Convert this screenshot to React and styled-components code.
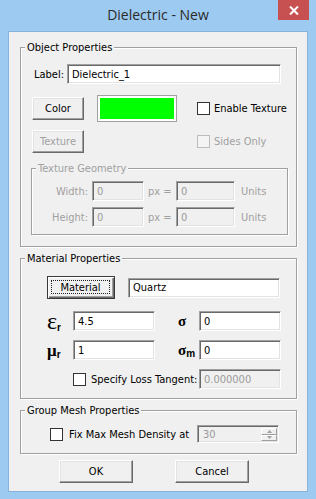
import React from "react";
import styled, { createGlobalStyle, css } from "styled-components";

const GlobalStyle = createGlobalStyle`
  html, body {
    margin: 0;
    padding: 0;
  }
  body {
    background: #9dcaf0;
    font-family: "DejaVu Sans Condensed", "Liberation Sans", sans-serif;
    font-size: 11px;
    color: #000;
  }
`;

const Window = styled.div`
  width: 316px;
  height: 499px;
  background: #9dcaf0;
  display: flex;
  flex-direction: column;
`;

const TitleBar = styled.div`
  height: 31px;
  position: relative;
  display: flex;
  justify-content: center;
  align-items: flex-start;
  padding-top: 5px;
  box-sizing: border-box;
`;

const Title = styled.div`
  font-family: "Open Sans", "Liberation Sans", sans-serif;
  font-size: 14px;
  line-height: 20px;
  color: #2a2a2a;
`;

const CloseBtn = styled.div`
  position: absolute;
  top: 0;
  right: 7px;
  width: 31px;
  height: 20px;
  background: #c75050;
  display: flex;
  align-items: center;
  justify-content: center;
`;

const Client = styled.div`
  margin: 0 8px;
  height: 461px;
  box-sizing: border-box;
  border: 1px solid #86b3de;
  background: #f0f0f0;
  padding: 9px 10px 0 11px;
  display: flex;
  flex-direction: column;
`;

const Group = styled.fieldset`
  margin: ${(p) => p.$margin || "0"};
  padding: ${(p) => p.$padding || "0"};
  min-width: 0;
  border: 1px solid #a0a0a0;
  box-shadow: 1px 1px 0 #fff, inset 1px 1px 0 #fff;
  color: ${(p) => (p.$disabled ? "#a0a0a0" : "#000")};
`;

const Legend = styled.legend`
  margin-left: 4px;
  padding: 0 2px;
  line-height: 13px;
  background: #f0f0f0;
`;

const Row = styled.div`
  display: flex;
  align-items: center;
  height: ${(p) => p.$h || 20}px;
  margin-top: ${(p) => p.$mt || 0}px;
  padding-left: ${(p) => p.$pl || 0}px;
`;

const Text = styled.span`
  display: inline-block;
  width: ${(p) => (p.$w ? `${p.$w}px` : "auto")};
  margin-left: ${(p) => p.$ml || 0}px;
  text-align: ${(p) => p.$align || "left"};
  color: ${(p) => (p.$disabled ? "#a0a0a0" : "inherit")};
  white-space: nowrap;
`;

const sunken = css`
  box-sizing: border-box;
  border-style: solid;
  border-width: 1px;
  border-color: #a0a0a0 #fff #fff #a0a0a0;
  box-shadow: inset 1px 1px 0 #696969, inset -1px -1px 0 #e3e3e3;
`;

const Field = styled.input`
  ${sunken};
  width: ${(p) => p.$w}px;
  height: ${(p) => p.$h || 20}px;
  margin: 0 0 0 ${(p) => p.$ml || 0}px;
  padding: 0 0 0 4px;
  font: inherit;
  color: ${(p) => (p.disabled ? "#9a9a9a" : "#000")};
  background: ${(p) => (p.disabled ? "#f0f0f0" : "#fff")};
  outline: none;
`;

const Button = styled.button`
  box-sizing: border-box;
  width: ${(p) => p.$w}px;
  height: 23px;
  margin: 0 0 0 ${(p) => p.$ml || 0}px;
  padding: 0;
  font: inherit;
  color: ${(p) => (p.disabled ? "#a0a0a0" : "#000")};
  background: #f0f0f0;
  border-style: solid;
  border-width: 1px;
  border-color: #fff #696969 #696969 #fff;
  box-shadow: inset -1px -1px 0 #a0a0a0, inset 1px 1px 0 #e3e3e3;
  display: flex;
  align-items: center;
  justify-content: center;
`;

const DefaultButton = styled(Button)`
  border-color: #3a3a3a;
  box-shadow: inset 1px 1px 0 #fff, inset -1px -1px 0 #696969,
    inset -2px -2px 0 #a0a0a0;
  padding: 3px 4px 4px 3px;
`;

const FocusRing = styled.span`
  flex: 1;
  align-self: stretch;
  border: 1px dotted #222;
  display: flex;
  align-items: center;
  justify-content: center;
`;

const Swatch = styled.div`
  box-sizing: border-box;
  width: 80px;
  height: 27px;
  margin-left: 13px;
  border: 1px solid #a0a0a0;
  padding: 2px;
  background: #fff;
`;

const SwatchFill = styled.div`
  width: 100%;
  height: 100%;
  background: ${(p) => p.$color};
`;

const Check = styled.span`
  box-sizing: border-box;
  width: 13px;
  height: 13px;
  flex: none;
  margin-left: ${(p) => p.$ml || 0}px;
  border: 1px solid ${(p) => (p.$disabled ? "#bcbcbc" : "#333")};
  background: ${(p) => (p.$disabled ? "#f4f4f4" : "#fff")};
`;

const ParamGrid = styled.div`
  display: grid;
  grid-template-columns: 26px 82px 23px 21px 82px;
  grid-auto-rows: 20px;
  row-gap: 9px;
  margin-top: 12px;
  padding-left: 26px;
  align-items: center;
`;

const Sym = styled.span`
  display: flex;
  align-items: baseline;
  font-weight: bold;
  color: #000;
  grid-column: ${(p) => p.$col};
`;

const Greek = styled.span`
  font-family: "Liberation Serif", "DejaVu Serif", serif;
  font-size: ${(p) => p.$size}px;
  font-weight: ${(p) => p.$weight || "bold"};
  line-height: 1;
`;

const Sub = styled.span`
  font-family: "Liberation Sans", sans-serif;
  font-size: 10px;
  font-weight: bold;
  position: relative;
  top: 2px;
`;

const Cell = styled.div`
  grid-column: ${(p) => p.$col};
  display: flex;
  align-items: center;
`;

const Spin = styled.div`
  ${sunken};
  width: 82px;
  height: 18px;
  margin-left: ${(p) => p.$ml || 0}px;
  background: #f0f0f0;
  display: flex;
  align-items: stretch;
  padding: 2px 1px 1px 2px;
  color: #9a9a9a;
`;

const SpinValue = styled.span`
  flex: 1;
  padding-left: 3px;
  display: flex;
  align-items: center;
`;

const SpinArrows = styled.div`
  width: 16px;
  display: flex;
  flex-direction: column;
`;

const SpinHalf = styled.div`
  flex: 1;
  box-sizing: border-box;
  border-style: solid;
  border-width: 1px;
  border-color: #fff #a0a0a0 #a0a0a0 #fff;
  display: flex;
  align-items: center;
  justify-content: center;
`;

const Footer = styled.div`
  display: flex;
  gap: 42px;
  margin-top: 6px;
  padding-left: 39px;
`;

const Arrow = ({ up }) => (
  <svg width="5" height="3" viewBox="0 0 5 3">
    <path d={up ? "M0 3 L2.5 0 L5 3 Z" : "M0 0 L2.5 3 L5 0 Z"} fill="#a0a0a0" />
  </svg>
);

export default function App() {
  return (
    <>
      <GlobalStyle />
      <Window>
        <TitleBar>
          <Title>Dielectric - New</Title>
          <CloseBtn>
            <svg width="10" height="9" viewBox="0 0 10 9">
              <path d="M1 0.5 L9 8.5 M9 0.5 L1 8.5" stroke="#fff" strokeWidth="2" />
            </svg>
          </CloseBtn>
        </TitleBar>

        <Client>
          <Group $padding="10px 0 11px 0">
            <Legend>Object Properties</Legend>
            <Row $pl={13}>
              <Text $w={33}>Label:</Text>
              <Field $w={214} defaultValue="Dielectric_1" />
            </Row>
            <Row $h={27} $mt={11} $pl={11}>
              <Button $w={52}>Color</Button>
              <Swatch>
                <SwatchFill $color="#00ff00" />
              </Swatch>
              <Check $ml={20} />
              <Text $ml={4}>Enable Texture</Text>
            </Row>
            <Row $h={23} $mt={8} $pl={11}>
              <Button $w={52} disabled>
                Texture
              </Button>
              <Check $ml={113} $disabled />
              <Text $ml={4} $disabled>
                Sides Only
              </Text>
            </Row>
            <Group $margin="9px 8px 0 10px" $padding="6px 0 7px 0" $disabled>
              <Legend>Texture Geometry</Legend>
              <Row>
                <Text $w={56} $align="right">Width:</Text>
                <Field $w={52} $ml={4} disabled defaultValue="0" />
                <Text $ml={4} $w={28}>px =</Text>
                <Field $w={59} disabled defaultValue="0" />
                <Text $ml={6}>Units</Text>
              </Row>
              <Row $mt={6}>
                <Text $w={56} $align="right">Height:</Text>
                <Field $w={52} $ml={4} disabled defaultValue="0" />
                <Text $ml={4} $w={28}>px =</Text>
                <Field $w={59} disabled defaultValue="0" />
                <Text $ml={6}>Units</Text>
              </Row>
            </Group>
          </Group>

          <Group $margin="5px 0 0 0" $padding="11px 0 9px 0">
            <Legend>Material Properties</Legend>
            <Row $h={23} $pl={26}>
              <DefaultButton $w={68}>
                <FocusRing>Material</FocusRing>
              </DefaultButton>
              <Field $w={152} $ml={13} defaultValue="Quartz" />
            </Row>
            <ParamGrid>
              <Sym $col={1}>
                <Greek $size={24} $weight="normal">ε</Greek>
                <Sub>r</Sub>
              </Sym>
              <Cell $col={2}>
                <Field $w={82} defaultValue="4.5" />
              </Cell>
              <Sym $col={4}>
                <Greek $size={15}>σ</Greek>
              </Sym>
              <Cell $col={5}>
                <Field $w={82} defaultValue="0" />
              </Cell>

              <Sym $col={1}>
                <Greek $size={17}>μ</Greek>
                <Sub>r</Sub>
              </Sym>
              <Cell $col={2}>
                <Field $w={82} defaultValue="1" />
              </Cell>
              <Sym $col={4}>
                <Greek $size={15}>σ</Greek>
                <Sub>m</Sub>
              </Sym>
              <Cell $col={5}>
                <Field $w={82} defaultValue="0" />
              </Cell>

              <Cell $col="2 / 5">
                <Check />
                <Text $ml={5}>Specify Loss Tangent:</Text>
              </Cell>
              <Cell $col={5}>
                <Field $w={82} disabled defaultValue="0.000000" />
              </Cell>
            </ParamGrid>
          </Group>

          <Group $margin="5px 0 0 0" $padding="8px 0 10px 0">
            <Legend>Group Mesh Properties</Legend>
            <Row $h={18} $pl={29}>
              <Check />
              <Text $ml={6} $w={123}>Fix Max Mesh Density at</Text>
              <Spin $ml={5}>
                <SpinValue>30</SpinValue>
                <SpinArrows>
                  <SpinHalf>
                    <Arrow up />
                  </SpinHalf>
                  <SpinHalf>
                    <Arrow />
                  </SpinHalf>
                </SpinArrows>
              </Spin>
            </Row>
          </Group>

          <Footer>
            <Button $w={74}>OK</Button>
            <Button $w={74}>Cancel</Button>
          </Footer>
        </Client>
      </Window>
    </>
  );
}
